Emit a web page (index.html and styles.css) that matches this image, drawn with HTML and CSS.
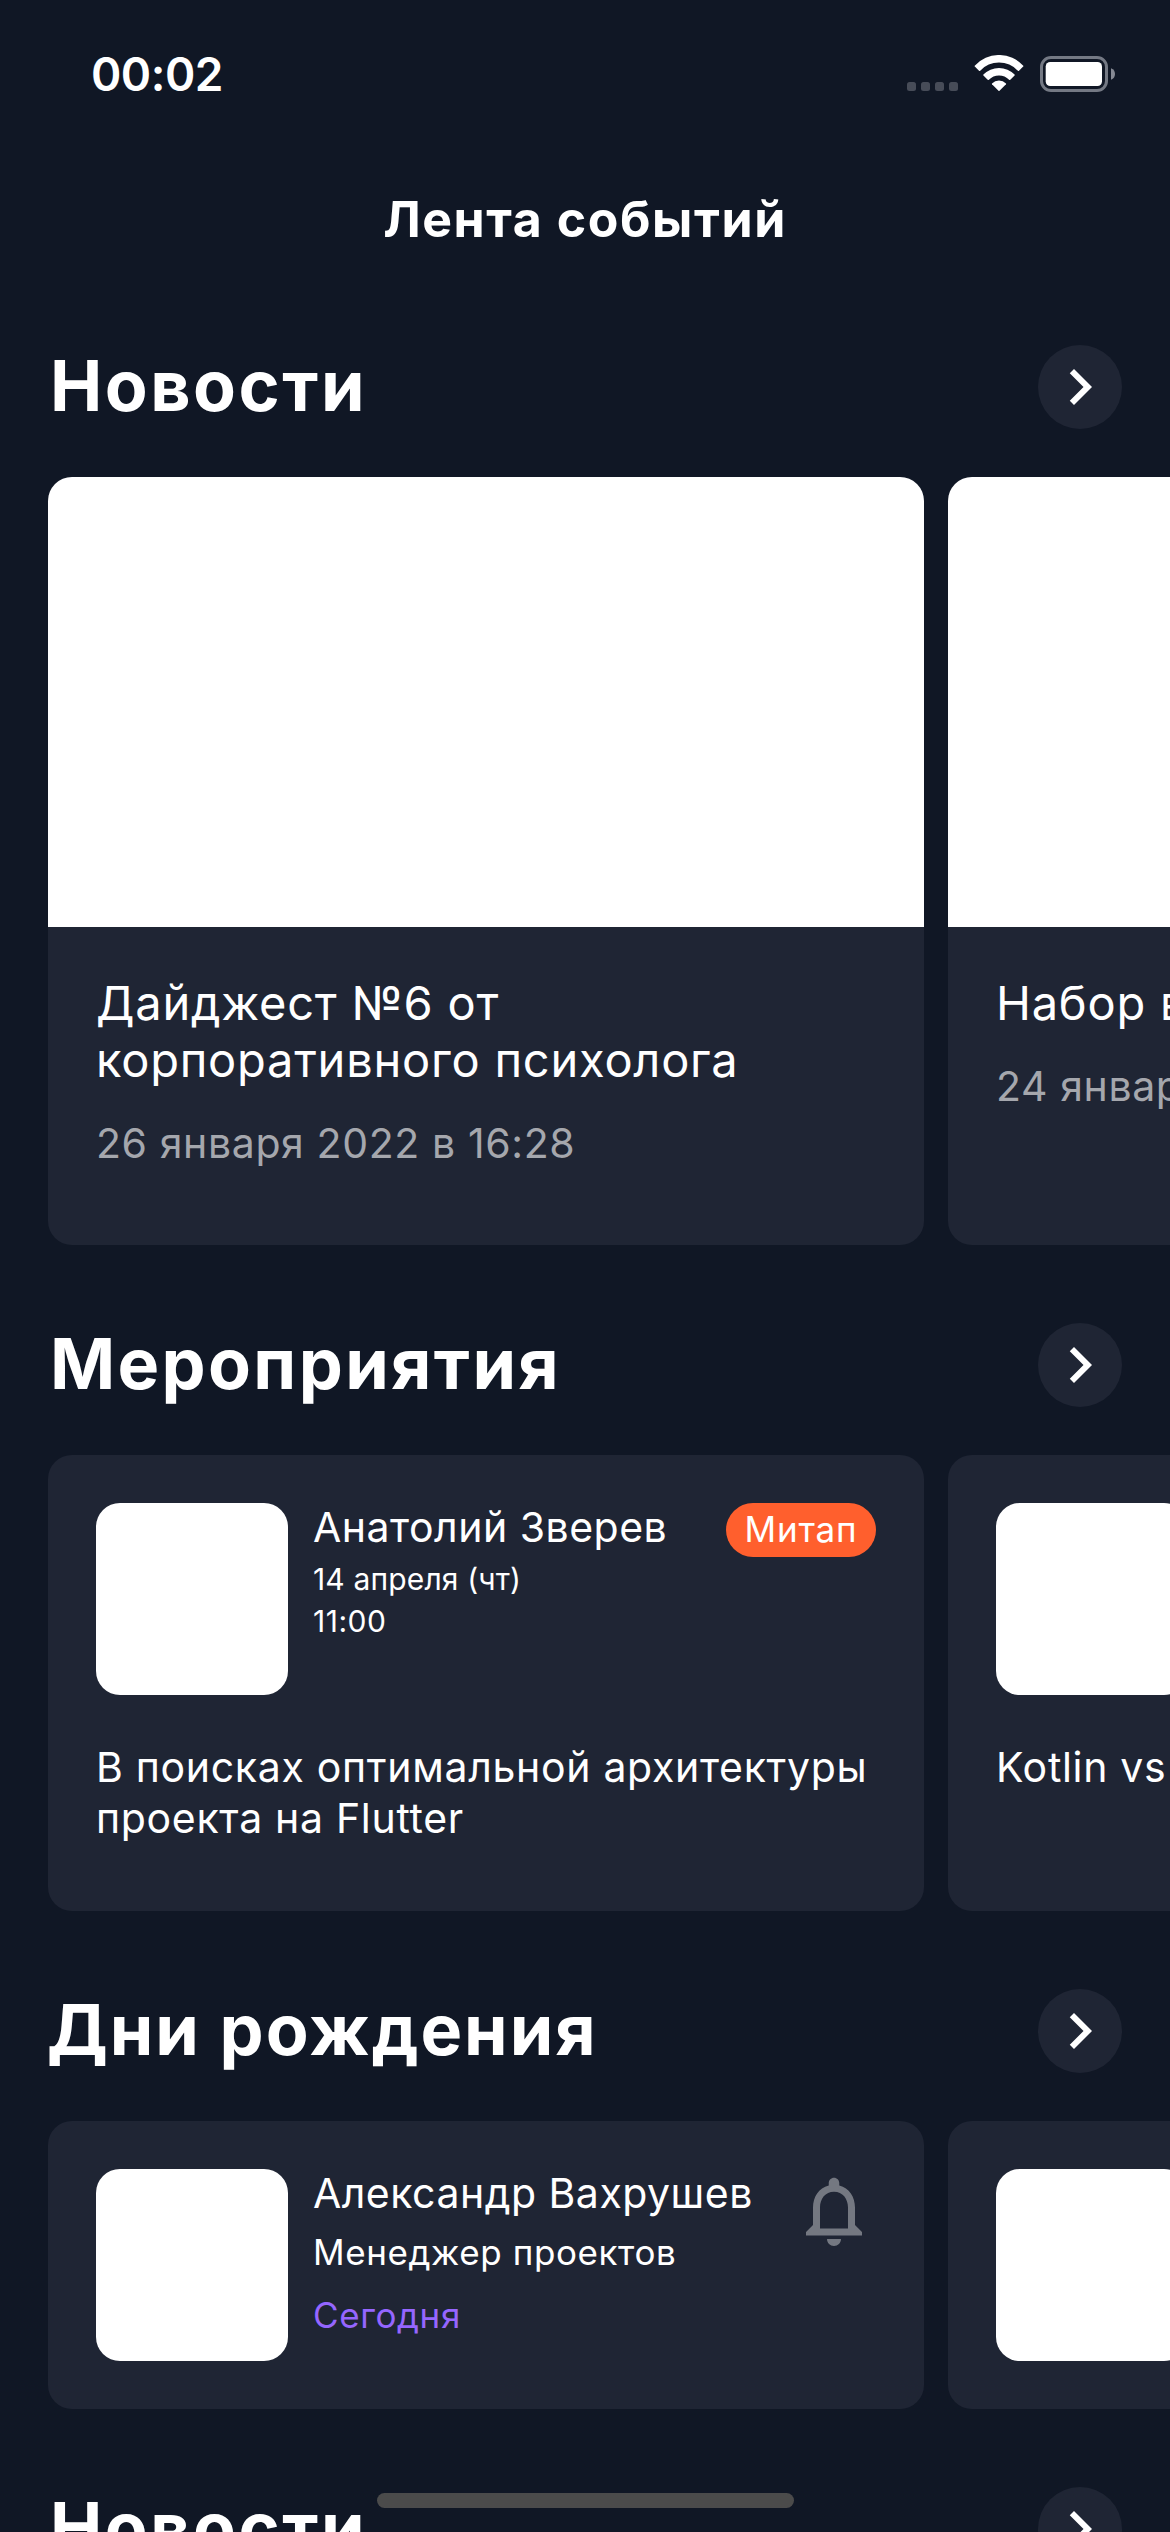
FILE: index.html
```
<!DOCTYPE html>
<html lang="ru">
<head>
  <meta charset="utf-8">
  <title>Лента событий</title>
  <link rel="stylesheet" href="styles.css">
</head>
<body>
  <svg class="defs" aria-hidden="true">
    <symbol id="chevron" viewBox="0 0 24 24">
      <path d="M10 6L8.59 7.41 13.17 12l-4.58 4.59L10 18l6-6z" fill="currentColor"/>
    </symbol>
    <symbol id="bell" viewBox="0 0 24 24">
      <path d="M12 22c1.1 0 2-.9 2-2h-4c0 1.1.9 2 2 2zm6-6v-5c0-3.07-1.63-5.64-4.5-6.32V4c0-.83-.67-1.5-1.5-1.5s-1.5.67-1.5 1.5v.68C7.64 5.36 6 7.92 6 11v5l-2 2v1h16v-1l-2-2zm-2 1H8v-6c0-2.48 1.51-4.5 4-4.5s4 2.02 4 4.5v6z" fill="currentColor"/>
    </symbol>
  </svg>

  <div class="screen">
    <div class="status-bar">
      <time class="clock">00:02</time>
      <div class="status-icons">
        <svg class="signal" viewBox="0 0 51 9">
          <g fill="#474c58">
            <rect x="0" width="9" height="9" rx="2.5"/>
            <rect x="14" width="9" height="9" rx="2.5"/>
            <rect x="28" width="9" height="9" rx="2.5"/>
            <rect x="42" width="9" height="9" rx="2.5"/>
          </g>
        </svg>
        <svg class="wifi" viewBox="0 0 50 36">
          <g fill="#fff">
            <path d="M.7 10.8A32.7 32.7 0 0 1 49.3 10.8Q49.6 11.2 49.2 11.6L45 15.7Q44.4 16.1 43.8 15.7A25.4 25.4 0 0 0 6.2 15.7Q5.6 16.1 5 15.7L.8 11.6Q.4 11.2 .7 10.8Z"/>
            <path d="M9.4 19.6A21.6 21.6 0 0 1 40.6 19.6Q41 20 40.6 20.5L36.3 24.7Q35.7 25.1 35.1 24.7A14 14 0 0 0 14.9 24.7Q14.3 25.1 13.7 24.7L9.4 20.5Q9 20 9.4 19.6Z"/>
            <path d="M18 28.4A9.8 9.8 0 0 1 32 28.4Q32.3 28.8 32 29.2L25.5 35.7Q25 36.1 24.5 35.7L18 29.2Q17.7 28.8 18 28.4Z"/>
          </g>
        </svg>
        <svg class="battery" viewBox="0 0 75 36">
          <rect x="1.5" y="1.5" width="65" height="33" rx="9.5" fill="none" stroke="#747984" stroke-width="3"/>
          <rect x="5.7" y="6" width="56.3" height="24" rx="4.5" fill="#fff"/>
          <path d="M71 12.2C73.8 13.2 75 15.4 75 18S73.8 22.8 71 23.8Z" fill="#858993"/>
        </svg>
      </div>
    </div>

    <header class="app-bar">
      <h1 class="page-title">Лента событий</h1>
    </header>

    <main class="feed">
      <section class="section">
        <div class="section-head">
          <h2 class="section-title section-title-news">Новости</h2>
          <button class="more" aria-label="Новости"><svg class="more-icon"><use href="#chevron"/></svg></button>
        </div>
        <div class="row">
          <article class="card news-card">
            <div class="news-image"></div>
            <div class="news-body">
              <h3 class="news-title">Дайджест №6 от<br>корпоративного психолога</h3>
              <p class="news-date">26 января 2022 в 16:28</p>
            </div>
          </article>
          <article class="card news-card">
            <div class="news-image"></div>
            <div class="news-body">
              <h3 class="news-title">Набор в</h3>
              <p class="news-date">24 января</p>
            </div>
          </article>
        </div>
      </section>

      <section class="section">
        <div class="section-head">
          <h2 class="section-title section-title-events">Мероприятия</h2>
          <button class="more" aria-label="Мероприятия"><svg class="more-icon"><use href="#chevron"/></svg></button>
        </div>
        <div class="row">
          <article class="card event-card">
            <div class="person">
              <div class="avatar"></div>
              <div class="person-info">
                <h3 class="name">Анатолий Зверев</h3>
                <p class="event-date">14 апреля (чт)</p>
                <p class="event-time">11:00</p>
              </div>
              <span class="badge">Митап</span>
            </div>
            <p class="event-text">В поисках оптимальной архитектуры<br>проекта на Flutter</p>
          </article>
          <article class="card event-card">
            <div class="person">
              <div class="avatar"></div>
            </div>
            <p class="event-text">Kotlin vs</p>
          </article>
        </div>
      </section>

      <section class="section">
        <div class="section-head">
          <h2 class="section-title section-title-birthdays">Дни рождения</h2>
          <button class="more" aria-label="Дни рождения"><svg class="more-icon"><use href="#chevron"/></svg></button>
        </div>
        <div class="row">
          <article class="card birthday-card">
            <div class="person">
              <div class="avatar"></div>
              <div class="person-info">
                <h3 class="name">Александр Вахрушев</h3>
                <p class="job">Менеджер проектов</p>
                <p class="today">Сегодня</p>
              </div>
              <svg class="bell"><use href="#bell"/></svg>
            </div>
          </article>
          <article class="card birthday-card">
            <div class="person">
              <div class="avatar"></div>
            </div>
          </article>
        </div>
      </section>

      <section class="section">
        <div class="section-head">
          <h2 class="section-title section-title-news">Новости</h2>
          <button class="more" aria-label="Новости"><svg class="more-icon"><use href="#chevron"/></svg></button>
        </div>
      </section>
    </main>

    <div class="home-indicator"></div>
  </div>
</body>
</html>
```
FILE: styles.css
```
* {
  box-sizing: border-box;
}

body,
h1,
h2,
h3,
p {
  margin: 0;
}

body {
  background: #101725;
  color: #fff;
  font-family: Inter, "Liberation Sans", sans-serif;
}

.defs {
  display: none;
}

.screen {
  position: relative;
  display: flex;
  flex-direction: column;
  width: 1170px;
  height: 2532px;
  overflow: hidden;
}

/* Status bar */
.status-bar {
  display: flex;
  flex: none;
  justify-content: space-between;
  height: 141px;
  padding: 44px 55px 0 91px;
}

.clock {
  font-size: 46px;
  font-weight: 600;
  line-height: 60px;
  letter-spacing: -0.48px;
}

.status-icons {
  display: flex;
  align-items: flex-end;
  height: 48px;
}

.signal {
  width: 51px;
  height: 9px;
  margin: 0 16px 1px 0;
}

.wifi {
  width: 50px;
  height: 36px;
  margin: 0 16px 1px 0;
}

.battery {
  width: 75px;
  height: 36px;
}

/* App bar */
.app-bar {
  display: flex;
  flex: none;
  align-items: center;
  justify-content: center;
  height: 168px;
  padding-bottom: 12px;
}

.page-title {
  font-size: 50px;
  font-weight: 700;
  line-height: 60px;
  letter-spacing: 1.58px;
}

/* Feed */
.feed {
  display: flex;
  flex-direction: column;
  gap: 78px;
  padding: 36px 48px 0;
}

.section {
  display: flex;
  flex-direction: column;
  gap: 48px;
}

.section-head {
  display: flex;
  justify-content: space-between;
  height: 84px;
}

.section-title {
  font-size: 70px;
  font-weight: 700;
  line-height: 81px;
  white-space: nowrap;
}

.section-title-news {
  padding-left: 2px;
  letter-spacing: 2.5px;
}

.section-title-events {
  padding-left: 2px;
  letter-spacing: 2.35px;
}

.section-title-birthdays {
  margin-left: -1px;
  letter-spacing: 2px;
}

.more {
  display: flex;
  align-items: center;
  justify-content: center;
  width: 84px;
  height: 84px;
  padding: 0;
  border: 0;
  border-radius: 50%;
  background: #1f2534;
  color: #fff;
}

.more-icon {
  width: 72px;
  height: 72px;
}

.row {
  display: flex;
  gap: 24px;
}

.card {
  flex: none;
  width: 876px;
  border-radius: 24px;
  background: #1f2534;
  overflow: hidden;
}

/* News */
.news-card {
  height: 768px;
}

.news-image {
  height: 450px;
  background: #fff;
}

.news-body {
  display: flex;
  flex-direction: column;
  gap: 30px;
  padding: 47px 48px 0;
}

.news-title {
  font-size: 47px;
  font-weight: 400;
  line-height: 57px;
  letter-spacing: 0.77px;
}

.news-date {
  color: #a5a7ad;
  font-size: 41px;
  line-height: 51px;
  letter-spacing: 0.61px;
}

/* People */
.person {
  display: flex;
  gap: 24px;
}

.avatar {
  flex: none;
  width: 192px;
  height: 192px;
  border-radius: 24px;
  background: #fff;
}

.person-info {
  flex: 1;
  padding-left: 1px;
  white-space: nowrap;
}

.name {
  font-size: 41px;
  font-weight: 400;
  line-height: 48px;
  letter-spacing: 0.5px;
}

/* Events */
.event-card {
  display: flex;
  flex-direction: column;
  gap: 47px;
  height: 456px;
  padding: 48px;
}

.event-date,
.event-time {
  font-size: 30px;
  line-height: 42px;
}

.event-date {
  margin-top: 7px;
  letter-spacing: 0.15px;
}

.event-time {
  letter-spacing: 0.5px;
}

.badge {
  width: 150px;
  height: 54px;
  border-radius: 27px;
  background: #ff5f2d;
  font-size: 35px;
  line-height: 53px;
  letter-spacing: 0.8px;
  text-align: center;
}

.event-text {
  font-size: 41px;
  line-height: 51px;
  letter-spacing: 0.69px;
  white-space: nowrap;
}

/* Birthdays */
.birthday-card {
  height: 288px;
  padding: 48px;
}

.job,
.today {
  font-size: 35px;
  line-height: 42px;
  letter-spacing: 0.6px;
}

.job {
  margin-top: 14px;
}

.today {
  margin-top: 21px;
  color: #9566ff;
}

.bell {
  flex: none;
  width: 84px;
  height: 84px;
  color: #747881;
}

.home-indicator {
  position: absolute;
  bottom: 24px;
  left: 377px;
  width: 417px;
  height: 15px;
  border-radius: 8px;
  background: #4b4b4b;
}
```
